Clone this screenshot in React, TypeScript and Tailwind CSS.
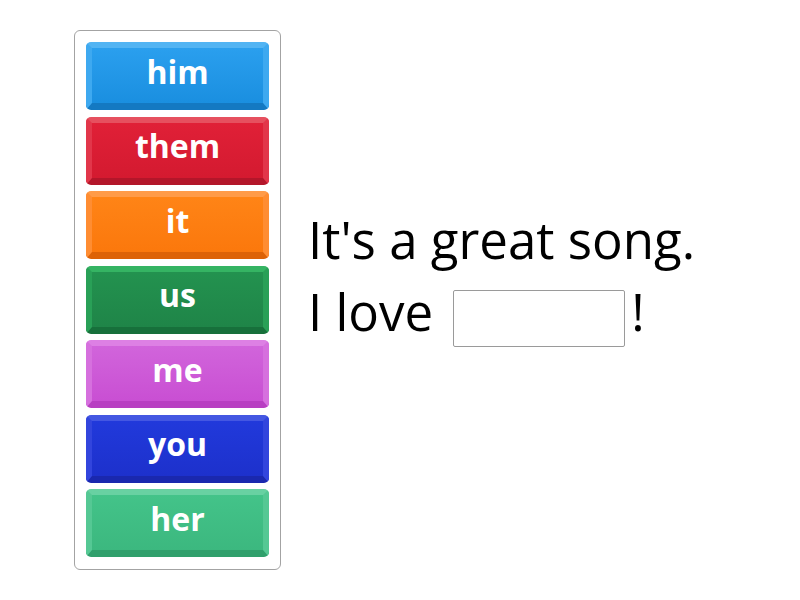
const tiles = [
  { word: 'him', face: 'bg-gradient-to-b from-[#2a9fee] to-[#1a8fe0]', edge: 'border-t-[#52b4f3] border-x-[#3ea9f0] border-b-[#1479c2]' },
  { word: 'them', face: 'bg-gradient-to-b from-[#e02037] to-[#d41a30]', edge: 'border-t-[#e6505f] border-x-[#e2364a] border-b-[#b3162a]' },
  { word: 'it', face: 'bg-gradient-to-b from-[#ff8416] to-[#fb780c]', edge: 'border-t-[#ff9b48] border-x-[#ff8d32] border-b-[#dd6206]' },
  { word: 'us', face: 'bg-gradient-to-b from-[#23924f] to-[#1f8548]', edge: 'border-t-[#35b463] border-x-[#29a057] border-b-[#17703b]' },
  { word: 'me', face: 'bg-gradient-to-b from-[#d164db] to-[#c94fd3]', edge: 'border-t-[#dd80e4] border-x-[#d670de] border-b-[#b83ec2]' },
  { word: 'you', face: 'bg-gradient-to-b from-[#2139db] to-[#1d31cc]', edge: 'border-t-[#4457e2] border-x-[#3245dd] border-b-[#1a28ae]' },
  { word: 'her', face: 'bg-gradient-to-b from-[#43c389] to-[#3cb87f]', edge: 'border-t-[#68d1a2] border-x-[#55c894] border-b-[#30a06c]' },
];

export default function App() {
  return (
    <div
      className="w-[800px] h-[600px] bg-white flex items-start"
      style={{ fontFamily: '"Open Sans", "Liberation Sans", sans-serif' }}
    >
      {/* word bank */}
      <div className="ml-[74px] mt-[30px] w-[207px] h-[540px] border border-[#a3a3a3] rounded-[6px] px-[11px] py-[11px] flex flex-col gap-[6.5px]">
        {tiles.map((t) => (
          <div
            key={t.word}
            className={`h-[68px] rounded-[5px] border-x-[6px] border-t-[6px] border-b-[7px] ${t.edge} ${t.face} flex items-center justify-center`}
          >
            <span className="text-white font-bold text-[32px] leading-none -translate-y-[4px]">{t.word}</span>
          </div>
        ))}
      </div>

      {/* sentence */}
      <div className="ml-[27px] mt-[203px] text-black text-[51px] leading-[72px]">
        <div className="whitespace-nowrap">It's a great song.</div>
        <div className="flex items-start whitespace-nowrap">
          <span>I love</span>
          <div className="ml-[20px] mt-[15px] w-[172px] h-[57px] border border-[#9a9a9a] rounded-[2px] bg-white" />
          <span className="ml-[6px]">!</span>
        </div>
      </div>
    </div>
  );
}
